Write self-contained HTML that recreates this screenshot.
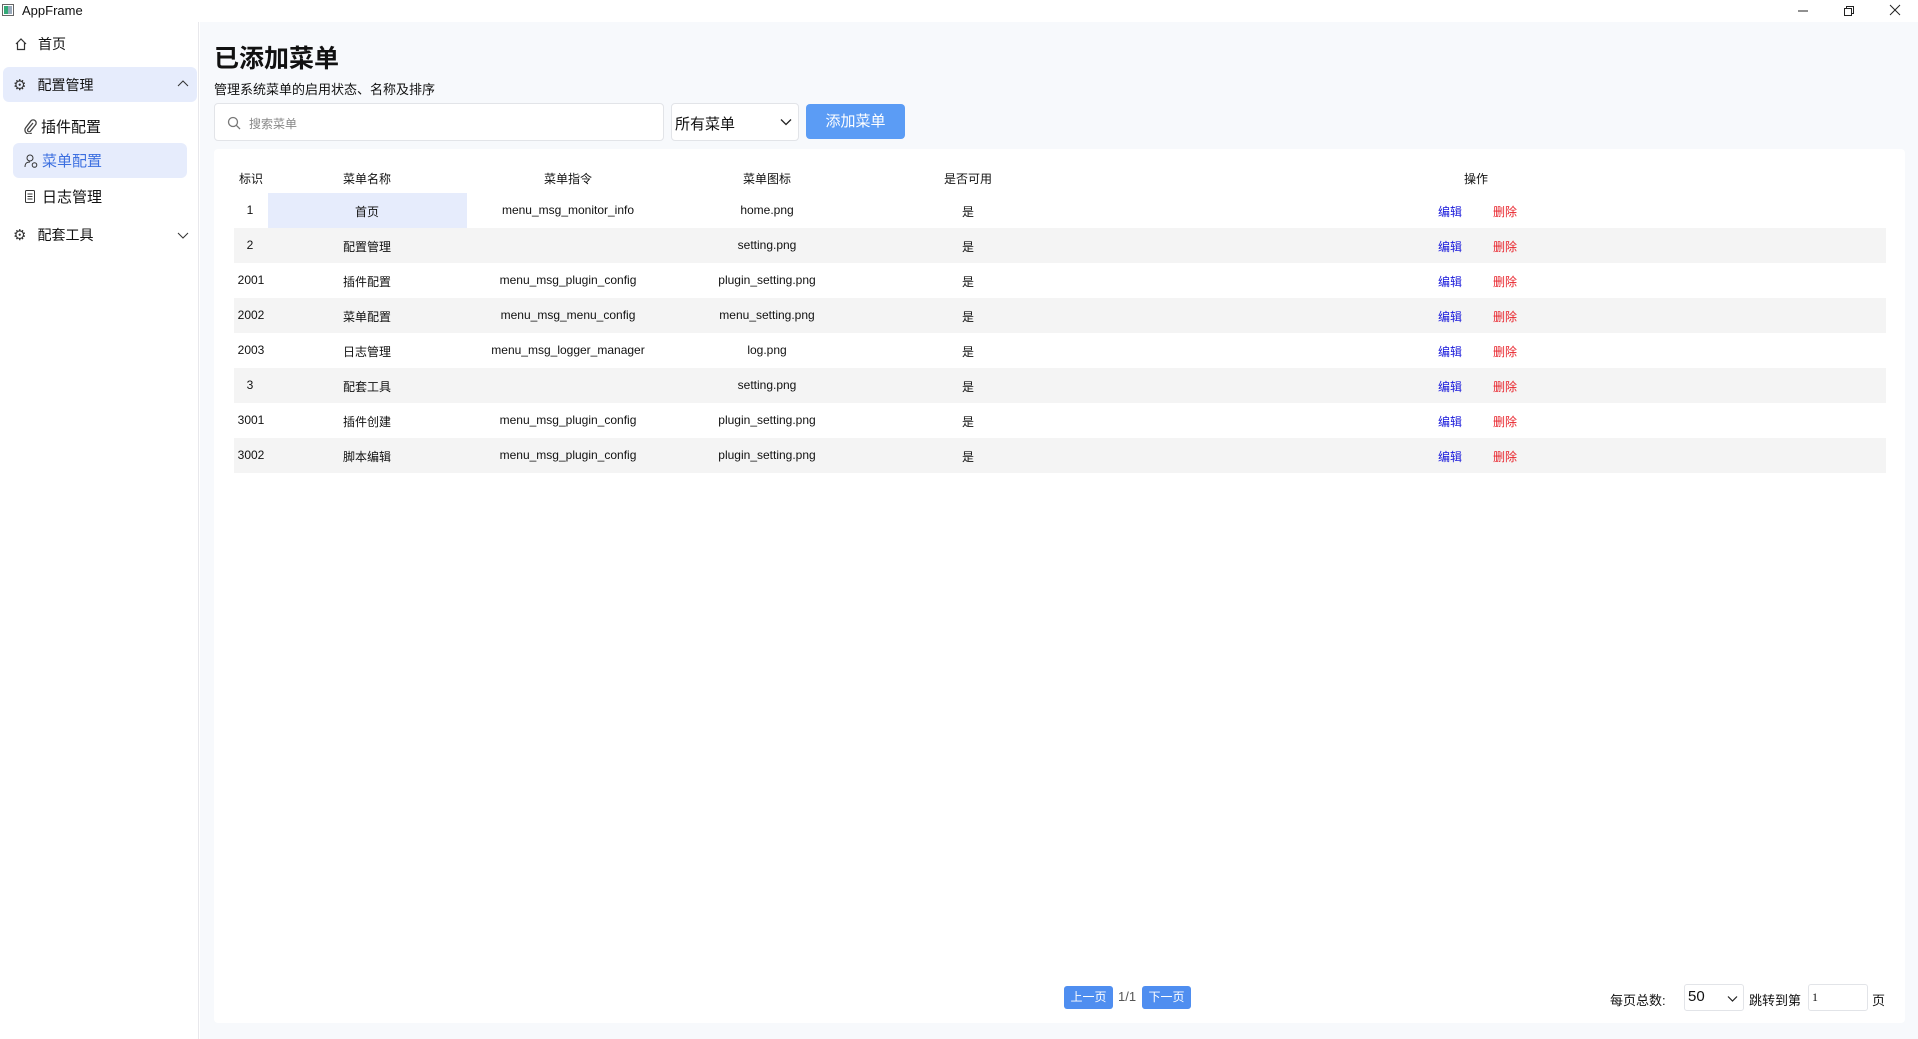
<!DOCTYPE html>
<html><head><meta charset="utf-8">
<style>
*{margin:0;padding:0;box-sizing:border-box}
body{width:1918px;height:1039px;overflow:hidden;background:#fff;font-family:"Liberation Sans","Noto Sans CJK SC",sans-serif;color:#111;position:relative}
.abs{position:absolute}
.tb{left:0;top:0;width:1918px;height:22px;background:#fff;font-size:13px}
.side{left:0;top:22px;width:199px;height:1017px;background:#fff;border-right:1px solid #e8e8ec}
.main{left:200px;top:22px;width:1718px;height:1017px;background:#f7f9fc}
.nav{position:absolute;font-size:14px;display:flex;align-items:center}
.hl{background:#e6ecfc;border-radius:6px}
.panel{left:214px;top:149px;width:1691px;height:874px;background:#fff;border-radius:4px}
.cell{position:absolute;font-size:12px;text-align:center;transform:translateX(-50%);white-space:nowrap}
.row{position:absolute;left:234px;width:1652px;height:35px}
.btn{position:absolute;background:#4f8ef0;color:#fff;font-size:12px;text-align:center;border-radius:3px}
</style></head><body>
<div class="abs tb">
  <svg class="abs" style="left:2px;top:4px" width="12" height="12"><rect x="0.5" y="0.5" width="11" height="11" fill="#fff" stroke="#666"/><rect x="2" y="2" width="4" height="8" fill="#3a7"/><rect x="6" y="2" width="4" height="8" fill="#9ab"/></svg>
  <span class="abs" style="left:22px;top:3px;font-size:13px">AppFrame</span>
  <svg class="abs" style="left:1797px;top:5px" width="12" height="12"><line x1="1" y1="6" x2="11" y2="6" stroke="#222"/></svg>
  <svg class="abs" style="left:1843px;top:5px" width="12" height="12" fill="none" stroke="#222"><rect x="1.5" y="3.5" width="7" height="7"/><path d="M3.5 3.5V1.5H10.5V8.5H8.5"/></svg>
  <svg class="abs" style="left:1889px;top:4px" width="12" height="12" stroke="#222"><line x1="1" y1="1" x2="11" y2="11"/><line x1="11" y1="1" x2="1" y2="11"/></svg>
</div>
<div class="abs side">
  <div class="nav" style="left:14px;top:12px"><svg width="14" height="14" fill="none" stroke="#333" stroke-width="1.2"><path d="M2 7L7 2L12 7M3.5 5.5V12.5H10.5V5.5"/></svg><span style="margin-left:10px">首页</span></div>
  <div class="nav hl" style="left:3px;top:45px;width:194px;height:35px;padding-left:10px"><span style="font-size:15px;color:#333">⚙</span><span style="margin-left:11px">配置管理</span>
    <svg style="position:absolute;right:8px;top:12px" width="12" height="10" fill="none" stroke="#333"><path d="M1 7L6 2L11 7"/></svg></div>
  <div class="nav" style="left:24px;top:94px;font-size:15px"><svg width="13" height="15" fill="none" stroke="#444" stroke-width="1.3"><path d="M9 4L4 10A1.6 1.6 0 0 0 6.3 12.3L11.3 6A3 3 0 0 0 7 1.8L2 8.3A4 4 0 0 0 7.6 14"/></svg><span style="margin-left:4px">插件配置</span></div>
  <div class="nav hl" style="left:13px;top:121px;width:174px;height:35px;padding-left:11px;font-size:15px"><svg width="14" height="16" fill="none" stroke="#333"><circle cx="6" cy="5" r="3"/><path d="M1 14C1 10 3 9 6 9"/><circle cx="10.5" cy="12" r="2.3"/></svg><span style="margin-left:4px;color:#3c6fe0">菜单配置</span></div>
  <div class="nav" style="left:24px;top:164px;font-size:15px"><svg width="12" height="15" fill="none" stroke="#333"><rect x="1.5" y="1.5" width="9" height="12" rx="1"/><path d="M3.5 5H8.5M3.5 7.5H8.5M3.5 10H8.5"/></svg><span style="margin-left:6px">日志管理</span></div>
  <div class="nav" style="left:13px;top:203px"><span style="font-size:15px;color:#333">⚙</span><span style="margin-left:11px">配套工具</span>
    <svg style="position:absolute;left:164px;top:5px" width="12" height="10" fill="none" stroke="#333"><path d="M1 3L6 8L11 3"/></svg></div>
</div>
<div class="abs main"></div>
<div class="abs" style="left:214px;top:39px;font-size:25px;font-weight:bold">已添加菜单</div>
<div class="abs" style="left:214px;top:79px;font-size:13px">管理系统菜单的启用状态、名称及排序</div>
<div class="abs" style="left:214px;top:103px;width:450px;height:38px;background:#fff;border:1px solid #e2e4e8;border-radius:4px">
  <svg class="abs" style="left:12px;top:12px" width="14" height="14" fill="none" stroke="#777" stroke-width="1.3"><circle cx="6" cy="6" r="4.5"/><line x1="9.3" y1="9.3" x2="13" y2="13"/></svg>
  <span class="abs" style="left:34px;top:11px;font-size:12px;color:#888">搜索菜单</span>
</div>
<div class="abs" style="left:671px;top:103px;width:128px;height:38px;background:#fff;border:1px solid #e2e4e8;border-radius:4px">
  <span class="abs" style="left:3px;top:9px;font-size:15px">所有菜单</span>
  <svg class="abs" style="left:108px;top:14px" width="12" height="9" fill="none" stroke="#222" stroke-width="1.3"><path d="M1 1.5L6 6.5L11 1.5"/></svg>
</div>
<div class="abs" style="left:806px;top:104px;width:99px;height:35px;background:#5b9cf5;border-radius:4px;color:#fff;font-size:15px;text-align:center;line-height:35px">添加菜单</div>
<div class="abs panel"></div>
<div class="cell" style="left:251px;top:170px">标识</div>
<div class="cell" style="left:367px;top:170px">菜单名称</div>
<div class="cell" style="left:568px;top:170px">菜单指令</div>
<div class="cell" style="left:767px;top:170px">菜单图标</div>
<div class="cell" style="left:968px;top:170px">是否可用</div>
<div class="cell" style="left:1476px;top:170px">操作</div>
<div class="row" style="top:228px;background:#f4f4f4"></div>
<div class="row" style="top:298px;background:#f4f4f4"></div>
<div class="row" style="top:368px;background:#f4f4f4"></div>
<div class="row" style="top:438px;background:#f4f4f4"></div>
<div class="abs" style="left:268px;top:193px;width:199px;height:35px;background:#e6ecfc"></div>
<div id="rows"></div>
<script>
var d=[["1","首页","menu_msg_monitor_info","home.png"],["2","配置管理","","setting.png"],["2001","插件配置","menu_msg_plugin_config","plugin_setting.png"],["2002","菜单配置","menu_msg_menu_config","menu_setting.png"],["2003","日志管理","menu_msg_logger_manager","log.png"],["3","配套工具","","setting.png"],["3001","插件创建","menu_msg_plugin_config","plugin_setting.png"],["3002","脚本编辑","menu_msg_plugin_config","plugin_setting.png"]];
var h="";d.forEach(function(r,i){var t=203+i*35;
h+='<div class="cell" style="left:'+(r[0].length>1?251:250)+'px;top:'+t+'px">'+r[0]+'</div>';
h+='<div class="cell" style="left:367px;top:'+t+'px">'+r[1]+'</div>';
h+='<div class="cell" style="left:568px;top:'+t+'px">'+r[2]+'</div>';
h+='<div class="cell" style="left:767px;top:'+t+'px">'+r[3]+'</div>';
h+='<div class="cell" style="left:968px;top:'+t+'px">是</div>';
h+='<div class="cell" style="left:1450px;top:'+t+'px;color:#1a1adb">编辑</div>';
h+='<div class="cell" style="left:1505px;top:'+t+'px;color:#e8222a">删除</div>';});
document.getElementById("rows").innerHTML=h;
</script>
<div class="btn" style="left:1064px;top:986px;width:49px;height:23px;line-height:23px">上一页</div>
<div class="abs" style="left:1118px;top:989px;font-size:13px;color:#555">1/1</div>
<div class="btn" style="left:1142px;top:986px;width:49px;height:23px;line-height:23px">下一页</div>
<div class="abs" style="left:1610px;top:990px;font-size:13px">每页总数:</div>
<div class="abs" style="left:1684px;top:984px;width:60px;height:27px;background:#fff;border:1px solid #e2e4e8;border-radius:3px">
  <span class="abs" style="left:3px;top:3px;font-size:15px">50</span>
  <svg class="abs" style="left:42px;top:10px" width="11" height="8" fill="none" stroke="#222" stroke-width="1.2"><path d="M1 1.5L5.5 6L10 1.5"/></svg>
</div>
<div class="abs" style="left:1749px;top:990px;font-size:13px">跳转到第</div>
<div class="abs" style="left:1808px;top:984px;width:60px;height:27px;background:#fff;border:1px solid #e2e4e8;border-radius:3px;font-size:12px;padding:5px 3px;font-family:'Liberation Serif',serif">1</div>
<div class="abs" style="left:1872px;top:990px;font-size:13px">页</div>
</body></html>
